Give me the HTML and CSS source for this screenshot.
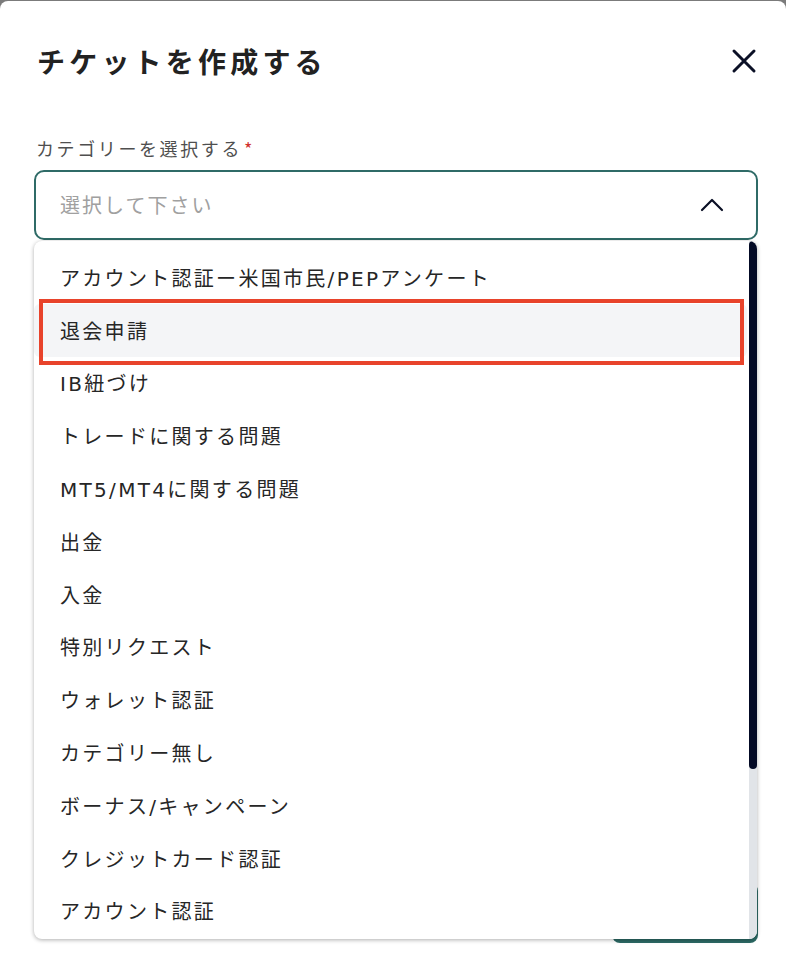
FILE: index.html
```html
<!DOCTYPE html>
<html lang="ja">
<head>
<meta charset="utf-8">
<title>チケットを作成する</title>
<link rel="stylesheet" href="styles.css">
</head>
<body>
<div class="modal">
  <header class="modal-head">
    <h1 class="modal-title">チケットを作成する</h1>
    <button class="close-btn" type="button" aria-label="閉じる">
      <svg width="28" height="28" viewBox="0 0 28 28" aria-hidden="true">
        <path d="M4 4 L24 24 M24 4 L4 24" stroke="#0b1026" stroke-width="3" stroke-linecap="round" fill="none"/>
      </svg>
    </button>
  </header>

  <div class="field">
    <label class="field-label">カテゴリーを選択する<span class="req">*</span></label>
    <div class="select-wrap">
      <div class="select">
        <span class="placeholder">選択して下さい</span>
        <svg class="chevron" width="24" height="14" viewBox="0 0 24 14" aria-hidden="true">
          <polyline points="2,12 12,2 22,12" stroke="#0b1026" stroke-width="2.2" stroke-linecap="round" stroke-linejoin="round" fill="none"/>
        </svg>
      </div>
      <div class="dropdown">
        <ul class="options">
          <li class="option">アカウント認証ー米国市民/PEPアンケート</li>
          <li class="option is-hover">退会申請<span class="mark"></span></li>
          <li class="option">IB紐づけ</li>
          <li class="option">トレードに関する問題</li>
          <li class="option">MT5/MT4に関する問題</li>
          <li class="option">出金</li>
          <li class="option">入金</li>
          <li class="option">特別リクエスト</li>
          <li class="option">ウォレット認証</li>
          <li class="option">カテゴリー無し</li>
          <li class="option">ボーナス/キャンペーン</li>
          <li class="option">クレジットカード認証</li>
          <li class="option">アカウント認証</li>
        </ul>
        <div class="scrollbar"><div class="thumb"></div></div>
      </div>
    </div>
  </div>

  <footer class="modal-foot">
    <button class="submit-btn" type="button" aria-label="送信"></button>
  </footer>
</div>
</body>
</html>
```

FILE: styles.css
```css
* { box-sizing: border-box; }

html, body {
  margin: 0;
  padding: 0;
}

body {
  background: #7b7b7b;
  font-family: "DejaVu Sans", "Noto Sans CJK JP", sans-serif;
  overflow: hidden;
}

.modal {
  margin-top: 1px;
  background: #ffffff;
  border-radius: 8px 8px 0 0;
  height: 979px;
  padding: 39px 28px 0 34px;
}

.modal-head {
  display: flex;
  align-items: center;
  justify-content: space-between;
  height: 42px;
}

.modal-title {
  margin: 0 0 0 3px;
  font-family: "Noto Sans CJK JP", sans-serif;
  font-weight: 700;
  font-size: 28px;
  line-height: 42px;
  letter-spacing: 4.2px;
  color: #222222;
}

.close-btn {
  border: 0;
  background: none;
  padding: 0;
  width: 28px;
  height: 28px;
  display: block;
}

.close-btn svg { display: block; }

.field {
  margin-top: 53px;
}

.field-label {
  display: block;
  margin-left: 2px;
  font-family: "Noto Sans CJK JP", sans-serif;
  font-size: 18px;
  line-height: 26px;
  letter-spacing: 2.6px;
  color: #4f4f4f;
}

.req {
  color: #d0312d;
  margin-left: 2px;
  letter-spacing: 0;
}

.select-wrap {
  position: relative;
  margin-top: 9px;
}

.select {
  height: 70px;
  border: 2.5px solid #2f6b67;
  border-radius: 10px;
  display: flex;
  align-items: center;
  justify-content: space-between;
  padding: 0 32px 0 24px;
}

.placeholder {
  font-family: "Noto Sans CJK JP", sans-serif;
  font-size: 20px;
  letter-spacing: 2px;
  color: #a0a0a0;
  line-height: 28px;
}

.chevron { display: block; margin-top: -1px; }

.dropdown {
  position: absolute;
  top: 71px;
  left: 0;
  right: 1px;
  height: 698px;
  background: #ffffff;
  border-radius: 8px;
  box-shadow: 0 1px 4px rgba(0, 0, 0, 0.32);
  overflow: hidden;
  z-index: 5;
}

.options {
  margin: 0;
  padding: 10px 10px 0 0;
  list-style: none;
}

.scrollbar {
  position: absolute;
  top: 0;
  right: 0;
  bottom: 0;
  width: 8px;
  background: #e1e4e8;
}

.thumb {
  height: 528px;
  background: #030a25;
  border-radius: 4px;
}

.option {
  position: relative;
  height: 52.8px;
  display: flex;
  align-items: center;
  padding: 0 0 0 26px;
  border-radius: 6px;
  font-size: 20px;
  letter-spacing: 2.3px;
  color: #262626;
  white-space: nowrap;
}

.option.is-hover {
  background: #f4f5f7;
}

.mark {
  position: absolute;
  top: -5px;
  bottom: -8px;
  left: 5px;
  right: 3px;
  border: 4px solid #e8432b;
  pointer-events: none;
}

.modal-foot {
  display: flex;
  justify-content: flex-end;
  margin-top: 643px;
}

.submit-btn {
  width: 146px;
  height: 60px;
  border: 0;
  border-radius: 8px;
  background: #2c6a65;
}
```
